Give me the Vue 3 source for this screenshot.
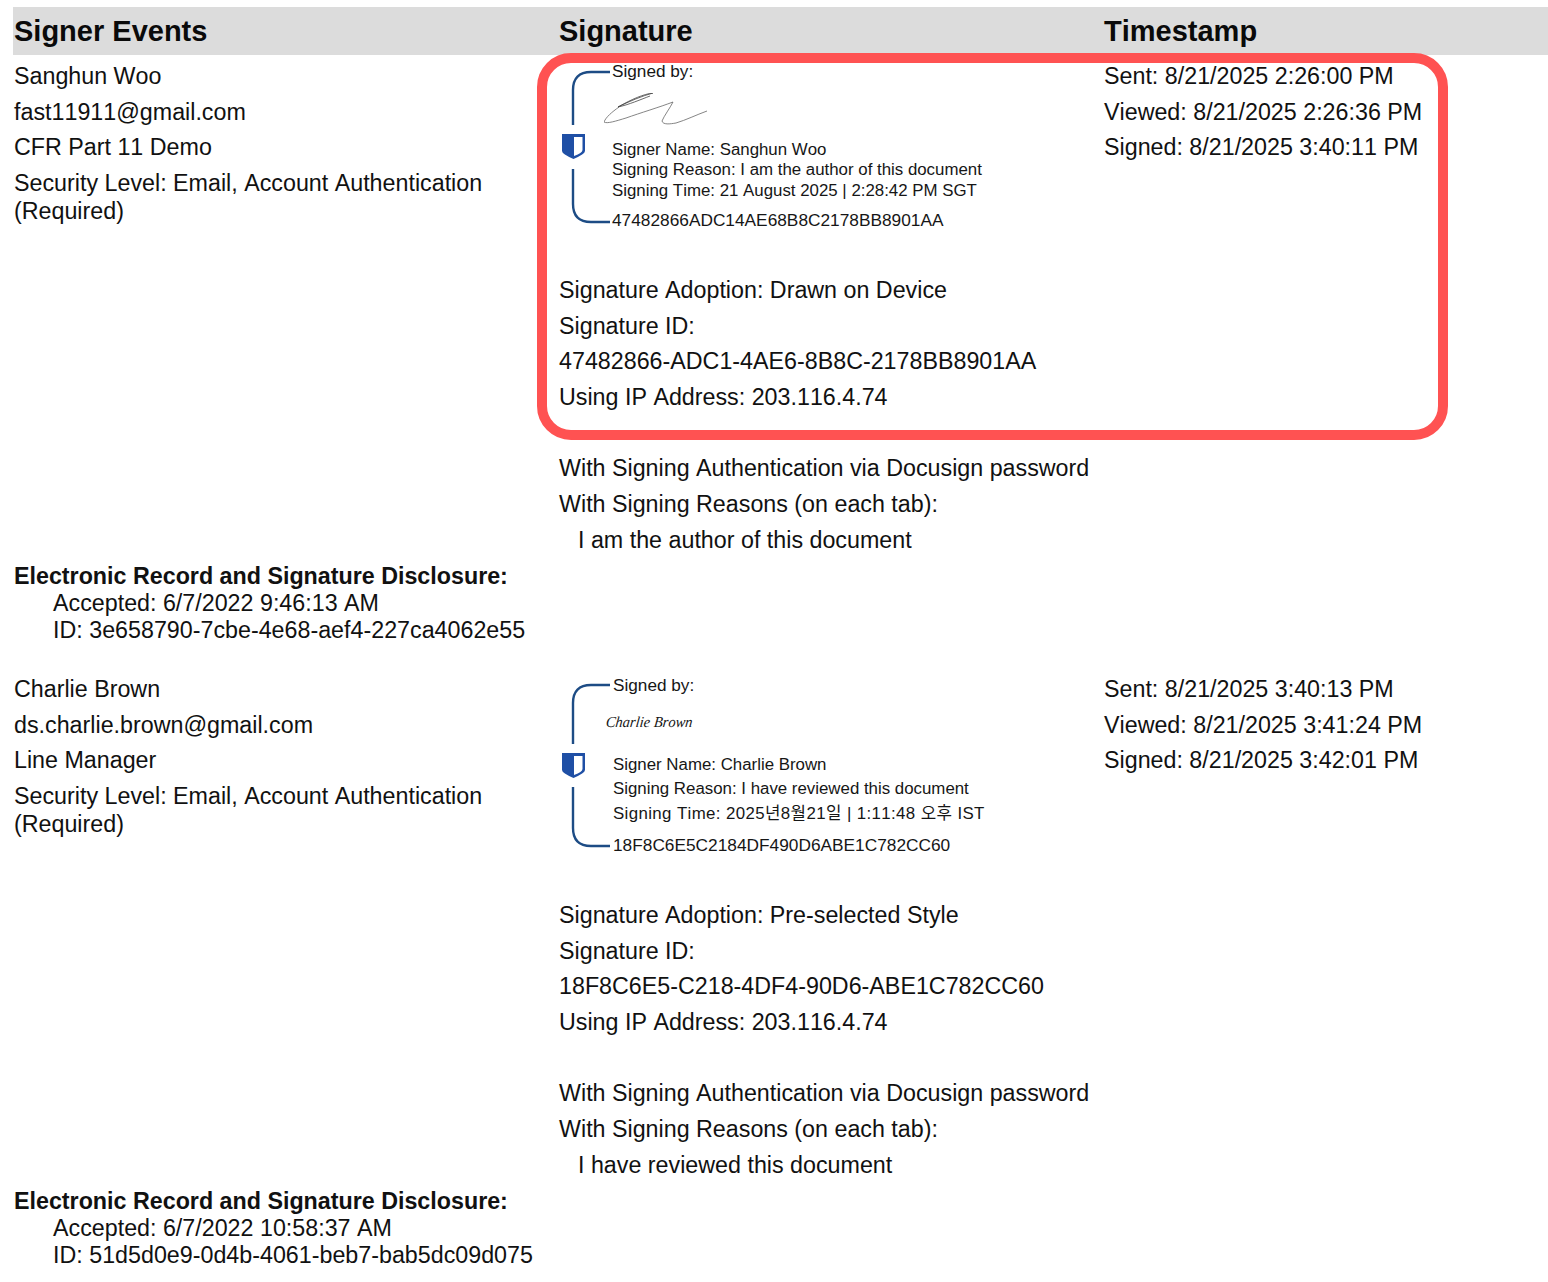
<script setup>
const bracket = (end, shieldTop, start, bottom) => ({
  top: `M51 17H32Q14 17 14 35V${end}`,
  bottom: `M14 ${start}V${bottom - 18}Q14 ${bottom} 32 ${bottom}H51`,
  shield: `M3 ${shieldTop}H26V${shieldTop + 17}Q26 ${shieldTop + 20} 14.5 ${shieldTop + 25}Q3 ${shieldTop + 20} 3 ${shieldTop + 17}Z`,
  inner: `M15 ${shieldTop + 3}H23.5V${shieldTop + 16}Q23.5 ${shieldTop + 19} 15 ${shieldTop + 22}Z`,
})

const signers = [
  {
    left: ['Sanghun Woo', 'fast11911@gmail.com', 'CFR Part 11 Demo', 'Security Level: Email, Account Authentication (Required)'],
    accepted: 'Accepted: 6/7/2022 9:46:13 AM',
    id: 'ID: 3e658790-7cbe-4e68-aef4-227ca4062e55',
    stampClass: 'stamp-a',
    height: 222,
    art: bracket(70, 79, 114, 167),
    details: ['Signer Name: Sanghun Woo', 'Signing Reason: I am the author of this document', 'Signing Time: 21 August 2025 | 2:28:42 PM SGT'],
    hash: '47482866ADC14AE68B8C2178BB8901AA',
    adoption: ['Signature Adoption: Drawn on Device', 'Signature ID:', '47482866-ADC1-4AE6-8B8C-2178BB8901AA', 'Using IP Address: 203.116.4.74'],
    reason: 'I am the author of this document',
    times: ['Sent: 8/21/2025 2:26:00 PM', 'Viewed: 8/21/2025 2:26:36 PM', 'Signed: 8/21/2025 3:40:11 PM'],
    scribble: true,
  },
  {
    left: ['Charlie Brown', 'ds.charlie.brown@gmail.com', 'Line Manager', 'Security Level: Email, Account Authentication (Required)'],
    accepted: 'Accepted: 6/7/2022 10:58:37 AM',
    id: 'ID: 51d5d0e9-0d4b-4061-beb7-bab5dc09d075',
    stampClass: 'stamp-b',
    height: 234,
    art: bracket(76, 85, 119, 178),
    details: ['Signer Name: Charlie Brown', 'Signing Reason: I have reviewed this document', 'Signing Time: 2025년8월21일 | 1:11:48 오후 IST'],
    hash: '18F8C6E5C2184DF490D6ABE1C782CC60',
    adoption: ['Signature Adoption: Pre-selected Style', 'Signature ID:', '18F8C6E5-C218-4DF4-90D6-ABE1C782CC60', 'Using IP Address: 203.116.4.74'],
    reason: 'I have reviewed this document',
    times: ['Sent: 8/21/2025 3:40:13 PM', 'Viewed: 8/21/2025 3:41:24 PM', 'Signed: 8/21/2025 3:42:01 PM'],
    scribble: false,
  },
]
</script>

<template>
  <div class="page">
    <div class="head">
      <div>Signer Events</div>
      <div>Signature</div>
      <div>Timestamp</div>
    </div>

    <section v-for="s in signers" :key="s.hash" class="row">
      <div class="col-left">
        <p v-for="line in s.left" :key="line" class="line left-line">{{ line }}</p>
        <div class="disclosure">
          <strong>Electronic Record and Signature Disclosure:</strong>
          <div class="indent">{{ s.accepted }}</div>
          <div class="indent">{{ s.id }}</div>
        </div>
      </div>

      <div class="col-mid">
        <div class="stamp" :class="s.stampClass" :style="{ height: s.height + 'px' }">
          <svg class="bracket" width="52" :height="s.height" :viewBox="`0 0 52 ${s.height}`">
            <path :d="s.art.top" fill="none" stroke="#1d4c85" stroke-width="2.4" />
            <path :d="s.art.bottom" fill="none" stroke="#1d4c85" stroke-width="2.4" />
            <path :d="s.art.shield" fill="#1f4fa5" />
            <path :d="s.art.inner" fill="#fff" />
          </svg>
          <div class="stamp-text">
            <div class="signed-by">Signed by:</div>
            <div class="sig-box">
              <svg v-if="s.scribble" class="scribble" width="104" height="33" viewBox="0 0 104 33">
                <path d="M14 14C26 8 38 3 49 0C40 1 28 6 14 14C24 12 38 6 46 3" fill="none" stroke="#444" stroke-width=".8" />
                <path d="M0 29C2 24 8 19 15 14M0 29C3 31 12 28 22 25C36 20 56 14 69 9C66 15 60 23 58 28C59 32 66 31 72 30C82 27 92 22 103 18" fill="none" stroke="#666" stroke-width=".8" />
              </svg>
              <span v-else class="hand">Charlie Brown</span>
            </div>
            <div class="details">
              <div v-for="d in s.details" :key="d">{{ d }}</div>
            </div>
            <div class="hash">{{ s.hash }}</div>
          </div>
        </div>
        <p v-for="line in s.adoption" :key="line" class="line">{{ line }}</p>
        <p class="line gap">With Signing Authentication via Docusign password</p>
        <p class="line">With Signing Reasons (on each tab):</p>
        <p class="line reason">{{ s.reason }}</p>
      </div>

      <div class="col-right">
        <p v-for="t in s.times" :key="t" class="line">{{ t }}</p>
      </div>
    </section>

    <div class="highlight"></div>
  </div>
</template>

<style>
html, body { background: #fff; }
</style>

<style scoped>
.page {
  position: relative;
  width: 1548px;
  height: 1282px;
  padding-top: 7px;
  box-sizing: border-box;
  overflow: hidden;
  background: #fff;
  color: #111;
  font-family: "Liberation Sans", Arial, "Noto Sans CJK KR", sans-serif;
  font-size: 23.27px;
  font-kerning: none;
}
.head {
  display: grid;
  grid-template-columns: 545px 545px 1fr;
  height: 48px;
  margin-left: 13px;
  padding-left: 1px;
  align-items: center;
  background: #dcdcdc;
  color: #0a0a0a;
  font-size: 29px;
  font-weight: 700;
}
.row {
  display: grid;
  grid-template-columns: 545px 545px 1fr;
  height: 613px;
  padding-left: 14px;
}
.col-left {
  display: flex;
  flex-direction: column;
  padding: 8px 0 24.5px;
  box-sizing: border-box;
}
.row:last-of-type .col-left { padding-bottom: 12.5px; }
.col-right { padding-top: 8px; }
.line {
  margin: 0 0 8.2px;
  line-height: 27.5px;
}
.left-line { width: 490px; }
.disclosure {
  margin-top: auto;
  line-height: 27px;
}
.disclosure strong { display: block; }
.indent { padding-left: 39px; }
.stamp {
  display: flex;
  font-size: 16.85px;
  color: #161616;
}
.bracket { flex: none; width: 52px; margin-right: 1px; }
.stamp-text { min-width: 0; }
.stamp-b .stamp-text { padding-left: 1px; }
.signed-by { line-height: 20px; margin-top: 7px; font-size: 17.2px; }
.stamp-a .signed-by { margin-top: 6px; }
.sig-box { height: 57.75px; box-sizing: border-box; }
.stamp-a .sig-box { height: 58.75px; padding-top: 12px; }
.stamp-b .sig-box { padding-top: 17px; }
.scribble { display: block; margin-left: -8px; }
.hand {
  display: block;
  margin-left: -7px;
  line-height: 20px;
  font-family: "Liberation Serif", serif;
  font-size: 14.5px;
  font-style: italic;
  transform: skewX(-6deg) scaleY(1.05);
  transform-origin: left center;
  white-space: nowrap;
}
.details { line-height: 20.5px; white-space: nowrap; }
.stamp-b .details { line-height: 24.5px; }
.stamp-b .details div:last-child { letter-spacing: .38px; }
.hash { line-height: 20px; margin-top: 8.75px; font-size: 17.3px; }
.gap { margin-top: 43.9px; }
.reason { padding-left: 19px; }
.highlight {
  position: absolute;
  left: 537px;
  top: 53px;
  width: 911px;
  height: 387px;
  box-sizing: border-box;
  border: 10px solid #ff5252;
  border-radius: 34px;
  pointer-events: none;
}
</style>
